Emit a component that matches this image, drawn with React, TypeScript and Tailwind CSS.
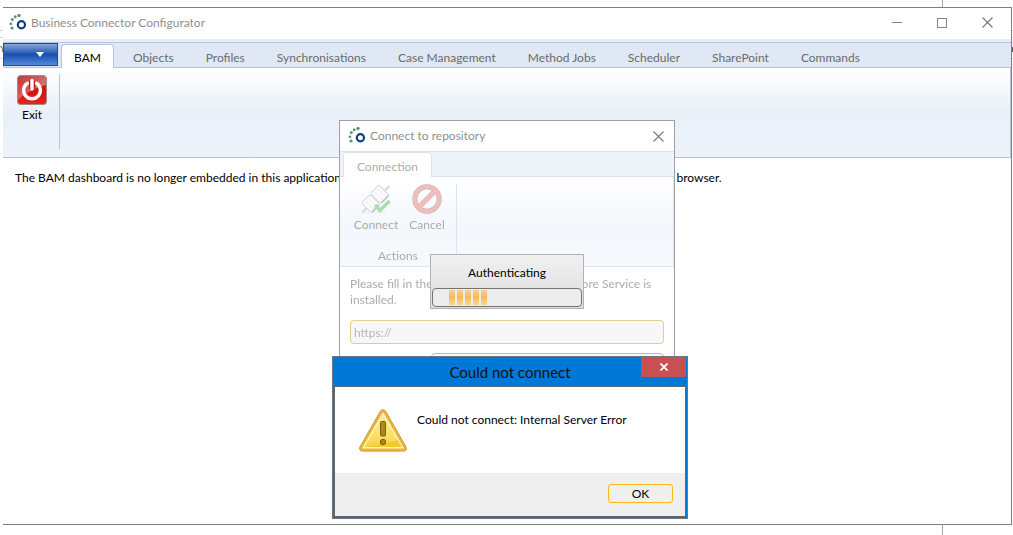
import React from "react";

const tabs = [
  "Objects",
  "Profiles",
  "Synchronisations",
  "Case Management",
  "Method Jobs",
  "Scheduler",
  "SharePoint",
  "Commands",
];

function Logo() {
  return (
    <svg viewBox="0 0 18 18" className="size-[18px] shrink-0" aria-hidden="true">
      <g fill="#5d9482">
        <circle cx="3" cy="14" r="1.6" />
        <circle cx="1.9" cy="9.8" r="1.4" />
        <circle cx="3.3" cy="5.6" r="1.5" />
        <circle cx="6.2" cy="2.8" r="1.5" />
        <circle cx="10" cy="1.6" r="1.7" />
      </g>
      <circle cx="12.4" cy="10.8" r="3.6" fill="#fff" stroke="#0d3f7d" strokeWidth="2.2" />
    </svg>
  );
}

function CloseGlyph() {
  return (
    <svg viewBox="0 0 11 11" className="size-[11px]" stroke="#777" strokeWidth="1.1" aria-hidden="true">
      <path d="M.5.5l10 10M10.5.5l-10 10" />
    </svg>
  );
}

function PowerIcon() {
  return (
    <svg viewBox="0 0 30 30" className="size-[30px]" aria-hidden="true">
      <defs>
        <linearGradient id="pwr" x1="0" y1="0" x2="0" y2="1">
          <stop offset="0" stopColor="#b02a26" />
          <stop offset=".5" stopColor="#cf1512" />
          <stop offset="1" stopColor="#e82421" />
        </linearGradient>
        <linearGradient id="gloss" x1="0" y1="0" x2="1" y2="1">
          <stop offset="0" stopColor="#fff" stopOpacity=".1" />
          <stop offset="1" stopColor="#fff" stopOpacity=".5" />
        </linearGradient>
      </defs>
      <rect x=".5" y=".5" width="29" height="29" rx="3" fill="url(#pwr)" stroke="#a98583" />
      <path d="M1 1h28v9C22 12 10 16 1 25z" fill="url(#gloss)" />
      <path d="M10.500 8.200a8.400 8.400 0 1 0 9 0" fill="none" stroke="#fff" strokeWidth="3.400" strokeLinecap="round" />
      <path d="M15 5.500v8.500" stroke="#c81a17" strokeWidth="6" />
      <path d="M15 5.500v8.500" stroke="#fff" strokeWidth="3.400" strokeLinecap="round" />
    </svg>
  );
}

function PlugIcon() {
  return (
    <svg viewBox="0 0 30 30" className="size-[30px]" aria-hidden="true">
      <path d="M2 28.500h22" stroke="#ddd" strokeWidth="1.500" />
      <path d="M24 6l4.500-4M1.500 28l5-5" stroke="#aaa" strokeWidth="1.800" />
      <g transform="rotate(-45 15 15)" fill="#fafafa" stroke="#b0b0b0" strokeWidth="1">
        <rect x="2" y="7.500" width="12" height="14" rx="2" />
        <rect x="15" y="7" width="12" height="14.500" rx="2" />
        <path d="M6 7.500v14M10 7.500v14M19 7v14M23 7v14" stroke="#dcdcdc" />
        <path d="M3 21.500h10M16 21.500h10" stroke="#777" strokeWidth="1.400" />
      </g>
      <path d="M14 21l5 5.500L28.500 17" fill="none" stroke="#49c25c" strokeWidth="3.600" />
    </svg>
  );
}

function ForbiddenIcon() {
  return (
    <svg viewBox="0 0 30 30" className="size-[30px]" aria-hidden="true">
      <circle cx="15" cy="15" r="12.200" fill="none" stroke="#a86464" strokeWidth="5" />
      <path d="M6.800 23.200L23.200 6.800" stroke="#a86464" strokeWidth="5" />
      <circle cx="15" cy="15" r="12.200" fill="none" stroke="#e07c79" strokeWidth="3.700" />
      <path d="M6.600 23.400L23.400 6.600" stroke="#e07c79" strokeWidth="3.700" />
    </svg>
  );
}

function WarningIcon() {
  return (
    <svg viewBox="0 0 48 43" className="h-[43px] w-[48px] shrink-0" aria-hidden="true">
      <defs>
        <linearGradient id="warn" x1="0" y1="0" x2="0" y2="1">
          <stop offset="0" stopColor="#fdeb92" />
          <stop offset=".6" stopColor="#fce06a" />
          <stop offset="1" stopColor="#f7d23e" />
        </linearGradient>
      </defs>
      <path d="M24 .8c1.300 0 2.200.600 2.800 1.600l20.300 35.700c.9 1.900 0 4-2.200 4H3.100c-2.200 0-3.100-2.100-2.200-4L21.200 2.400c.6-1 1.500-1.600 2.800-1.600z" fill="#e9b53a" stroke="#d09a35" strokeWidth="1" />
      <path d="M24 4.500L43.800 38.800H4.200z" fill="url(#warn)" stroke="#fff3bd" strokeWidth="1.600" strokeLinejoin="round" />
      <path d="M7 38C18 36 31 33 39 31l4 7z" fill="#f0bf18" opacity=".55" />
      <rect x="21.500" y="12.500" width="5" height="14.500" rx="1" fill="#a88a1e" stroke="#75601c" />
      <circle cx="24" cy="33" r="2.700" fill="#a88a1e" stroke="#75601c" />
    </svg>
  );
}

function Backdrop() {
  return (
    <div className="absolute inset-0 overflow-hidden" aria-hidden="true">
      <div className="absolute inset-y-0 right-[70px] w-px bg-[#a5a5a5]" />
      <div className="absolute inset-x-0 top-[30px] h-px bg-[#d9d9d9]" />
      <div className="absolute inset-x-0 top-[37px] h-px bg-[#d9d9d9]" />
      <div className="absolute inset-x-0 top-[58px] h-px bg-[#d9d9d9]" />
      <div className="absolute top-[47px] right-0 h-[5px] w-px bg-[#555]" />
      <div className="absolute top-[46px] left-0 h-[6px] w-[3px] rounded-tr-sm border-t border-r border-[#888]" />
    </div>
  );
}

function ConnectDialog() {
  return (
    <section
      aria-label="Connect to repository"
      className="absolute inset-x-0 top-[112px] mx-auto h-[380px] w-[336px] border border-[#a0a0a0] bg-white"
    >
      <header className="flex h-[30px] items-center pr-[10px] pl-[8px]">
        <Logo />
        <h2 className="ml-[4px] flex-1 text-[#8f8f8f]">Connect to repository</h2>
        <button type="button" aria-label="Close">
          <CloseGlyph />
        </button>
      </header>
      <div className="opacity-50">
        <div className="flex h-[26px] items-end border-y border-[#b6c9df] bg-[#dde8f5] pl-[3px]">
          <button
            type="button"
            className="-mb-px h-[25px] w-[89px] rounded-t-[4px] border border-b-0 border-[#b6c9df] bg-white pt-[3px] text-[#555]"
          >
            Connection
          </button>
        </div>
        <div className="flex h-[90px] border-r border-b border-[#b6c9df] bg-linear-to-b from-white via-[#e9f0f8] to-[#ebf3fb] text-[#555]">
          <div className="mt-[7px] w-[117px] border-r border-[#b6c9df]">
            <div className="flex pl-[8px]">
              <button type="button" disabled className="flex w-[56px] flex-col items-center gap-[3px] whitespace-nowrap">
                <PlugIcon />
                Connect
              </button>
              <button type="button" disabled className="flex w-[46px] flex-col items-center gap-[3px] whitespace-nowrap">
                <ForbiddenIcon />
                Cancel
              </button>
            </div>
            <p className="mt-[15px] text-center">Actions</p>
          </div>
        </div>
        <div className="px-[10px] pt-[9px]">
          <label htmlFor="repository" className="block text-[#555]">
            Please fill in the server where your Blueriq Core Service is installed.
          </label>
          <input
            id="repository"
            defaultValue="https://"
            disabled
            className="mt-[12px] block h-[24px] w-full rounded-[4px] border border-[#bf9a20] bg-[#efefef] px-[3px] text-[#6a6a6a]"
          />
          <input
            aria-label="User name"
            disabled
            className="mt-[9px] ml-[81px] block h-[24px] w-[233px] rounded-[4px] border border-[#777] bg-[#efefef]"
          />
        </div>
      </div>
      <div
        role="status"
        className="absolute inset-x-0 top-[133px] mx-auto h-[55px] w-[154px] border border-[#b0b2b5] bg-linear-to-b from-[#f0f0f0] to-[#dedede] p-px text-center"
      >
        <p className="h-[32px] pt-[9px] text-black">Authenticating</p>
        <div className="flex h-[19px] gap-[2px] rounded-[4px] border border-[#747474] bg-[#ececec] py-px pl-[16px]">
          {[0, 1, 2, 3, 4].map((n) => (
            <span key={n} className="w-[6px] bg-linear-to-b from-[#f8cf8c] via-[#f6b957] to-[#f8d692]" />
          ))}
        </div>
      </div>
    </section>
  );
}

function ErrorDialog() {
  return (
    <section
      role="alertdialog"
      aria-label="Could not connect"
      className="absolute right-0 left-[6px] top-[348px] mx-auto h-[163px] w-[356px] border border-[#6e7680] bg-[#0078d7] px-px pb-px"
    >
      <header className="relative flex h-[29px] justify-center">
        <h2 className="pt-[4px] text-[15px] leading-[22px] text-[#111]">Could not connect</h2>
        <button
          type="button"
          aria-label="Close"
          className="absolute top-0 right-0 flex h-[20px] w-[45px] items-center justify-center bg-[#c75050]"
        >
          <svg viewBox="0 0 8 8" className="size-[8px]" stroke="#fff" strokeWidth="1.8" aria-hidden="true">
            <path d="M.5.5l7 7M7.5.5l-7 7" />
          </svg>
        </button>
      </header>
      <div className="flex h-[131px] flex-col border border-[#61686e] bg-white">
        <div className="flex flex-1 pt-[22px] pl-[24px]">
          <WarningIcon />
          <p className="ml-[10px] pt-[3px] text-black">Could not connect: Internal Server Error</p>
        </div>
        <footer className="flex h-[43px] justify-end bg-[#efefef] pt-[11px] pr-[12px]">
          <button type="button" className="h-[19px] w-[65px] rounded-[3px] border border-[#fdb813] pt-px text-black">
            OK
          </button>
        </footer>
      </div>
    </section>
  );
}

export default function App() {
  return (
    <div className="relative flex min-h-screen flex-col bg-white pt-[7px] pr-px pb-[10px] pl-[3px] font-['Lato','Open_Sans',sans-serif] text-[12px] leading-[16px]">
      <Backdrop />
      <main className="relative flex flex-1 flex-col border-t border-r border-b border-[#7f7f7f] bg-white">
        <header className="flex h-[31px] items-center pr-[18px] pb-[2px] pl-[6px]">
          <Logo />
          <h1 className="ml-[4px] flex-1 text-[#8f8f8f]">Business Connector Configurator</h1>
          <div className="flex items-center gap-[35px]">
            <button type="button" aria-label="Minimize" className="h-px w-[10px] bg-[#838383]" />
            <button type="button" aria-label="Maximize" className="size-[10px] border border-[#838383]" />
            <button type="button" aria-label="Close">
              <CloseGlyph />
            </button>
          </div>
        </header>
        <div className="h-[3px] bg-[#e6eef8]" />
        <nav className="flex h-[26px] items-end border-y border-[#b6c5da] bg-[#dfe8f4]">
          <button
            type="button"
            aria-label="Application menu"
            className="mb-px flex h-[23px] w-[55px] items-center justify-end border border-[#1e4c9c] bg-linear-to-b from-[#86a7dc] via-[#1a4fae] to-[#4f8ada] pr-[13px]"
          >
            <svg viewBox="0 0 8 5" className="h-[5px] w-[8px]" fill="#fff" aria-hidden="true">
              <path d="M0 0h8L4 5z" />
            </svg>
          </button>
          <button
            type="button"
            className="-mb-px ml-[3px] h-[24px] w-[53px] rounded-t-[4px] border border-b-0 border-[#b6c5da] bg-white pt-[3px] text-black"
          >
            BAM
          </button>
          <div className="ml-[3px] flex h-[24px]">
            {tabs.map((tab) => (
              <button key={tab} type="button" className="px-[16px] pt-[6px] whitespace-nowrap text-[#6b6b6b]">
                {tab}
              </button>
            ))}
          </div>
        </nav>
        <div className="flex h-[90px] border-r border-b border-[#b6c5da] bg-linear-to-b from-white via-[#eaf0f8] to-[#edf2fb] pt-[6px]">
          <div className="flex h-[75px] w-[57px] justify-center border-r border-[#b6c5da] pt-px pl-[2px]">
            <button type="button" className="flex h-[50px] flex-col items-center gap-[2px] text-black">
              <PowerIcon />
              Exit
            </button>
          </div>
        </div>
        <p className="px-[12px] pt-[12px] text-black">
          The BAM dashboard is no longer embedded in this application. Please open the BAM dashboard directly by using your default browser.
        </p>
        <ConnectDialog />
        <ErrorDialog />
      </main>
    </div>
  );
}
